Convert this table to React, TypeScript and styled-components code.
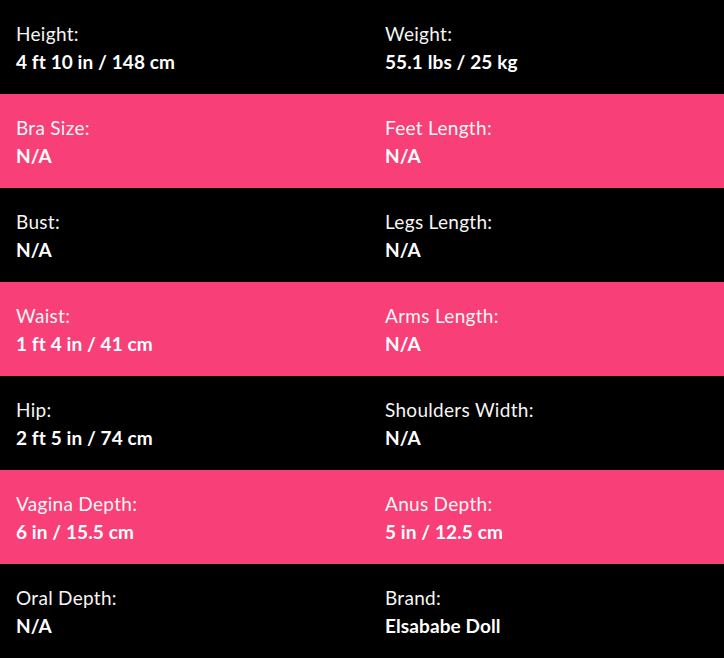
import styled, { createGlobalStyle } from 'styled-components';

const GlobalStyle = createGlobalStyle`
  html, body {
    margin: 0;
    padding: 0;
    background: #000;
  }
  body {
    font-family: Lato, 'Open Sans', sans-serif;
  }
`;

type Spec = { label: string; value: string };

const rows: [Spec, Spec][] = [
  [
    { label: 'Height:', value: '4 ft 10 in / 148 cm' },
    { label: 'Weight:', value: '55.1 lbs / 25 kg' },
  ],
  [
    { label: 'Bra Size:', value: 'N/A' },
    { label: 'Feet Length:', value: 'N/A' },
  ],
  [
    { label: 'Bust:', value: 'N/A' },
    { label: 'Legs Length:', value: 'N/A' },
  ],
  [
    { label: 'Waist:', value: '1 ft 4 in / 41 cm' },
    { label: 'Arms Length:', value: 'N/A' },
  ],
  [
    { label: 'Hip:', value: '2 ft 5 in / 74 cm' },
    { label: 'Shoulders Width:', value: 'N/A' },
  ],
  [
    { label: 'Vagina Depth:', value: '6 in / 15.5 cm' },
    { label: 'Anus Depth:', value: '5 in / 12.5 cm' },
  ],
  [
    { label: 'Oral Depth:', value: 'N/A' },
    { label: 'Brand:', value: 'Elsababe Doll' },
  ],
];

export default function App() {
  return (
    <>
      <GlobalStyle />
      <SSpecTable>
        {rows.map((row, i) => (
          <SSpecRow key={i} $pink={i % 2 === 1}>
            {row.map((cell) => (
              <SSpecCell key={cell.label}>
                <SLabel>{cell.label}</SLabel>
                <SValue>{cell.value}</SValue>
              </SSpecCell>
            ))}
          </SSpecRow>
        ))}
      </SSpecTable>
    </>
  );
}

const SSpecTable = styled.div`
  width: 724px;
  display: flex;
  flex-direction: column;
`;

const SSpecRow = styled.div<{ $pink: boolean }>`
  display: grid;
  grid-template-columns: 369px 1fr;
  height: 94px;
  box-sizing: border-box;
  padding: 20px 16px 0;
  background: ${(p) => (p.$pink ? '#f83f77' : '#000')};
  color: #fff;
`;

const SSpecCell = styled.div`
  display: flex;
  flex-direction: column;
`;

const SLabel = styled.span`
  font-size: 19px;
  line-height: 28px;
  font-weight: 400;
  letter-spacing: 0.3px;
  color: #f6f6f6;
`;

const SValue = styled.span`
  font-size: 19px;
  line-height: 28px;
  font-weight: 700;
  letter-spacing: 0.1px;
`;
